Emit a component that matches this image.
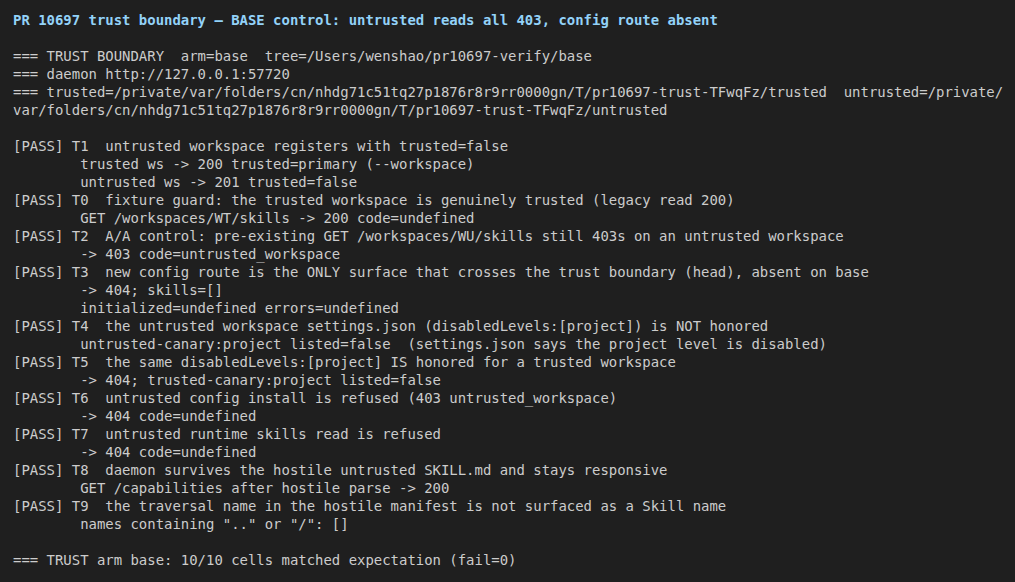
const lines = [
  "=== TRUST BOUNDARY  arm=base  tree=/Users/wenshao/pr10697-verify/base",
  "=== daemon http://127.0.0.1:57720",
  "=== trusted=/private/var/folders/cn/nhdg71c51tq27p1876r8r9rr0000gn/T/pr10697-trust-TFwqFz/trusted  untrusted=/private/",
  "var/folders/cn/nhdg71c51tq27p1876r8r9rr0000gn/T/pr10697-trust-TFwqFz/untrusted",
  "",
  "[PASS] T1  untrusted workspace registers with trusted=false",
  "        trusted ws -> 200 trusted=primary (--workspace)",
  "        untrusted ws -> 201 trusted=false",
  "[PASS] T0  fixture guard: the trusted workspace is genuinely trusted (legacy read 200)",
  "        GET /workspaces/WT/skills -> 200 code=undefined",
  "[PASS] T2  A/A control: pre-existing GET /workspaces/WU/skills still 403s on an untrusted workspace",
  "        -> 403 code=untrusted_workspace",
  "[PASS] T3  new config route is the ONLY surface that crosses the trust boundary (head), absent on base",
  "        -> 404; skills=[]",
  "        initialized=undefined errors=undefined",
  "[PASS] T4  the untrusted workspace settings.json (disabledLevels:[project]) is NOT honored",
  "        untrusted-canary:project listed=false  (settings.json says the project level is disabled)",
  "[PASS] T5  the same disabledLevels:[project] IS honored for a trusted workspace",
  "        -> 404; trusted-canary:project listed=false",
  "[PASS] T6  untrusted config install is refused (403 untrusted_workspace)",
  "        -> 404 code=undefined",
  "[PASS] T7  untrusted runtime skills read is refused",
  "        -> 404 code=undefined",
  "[PASS] T8  daemon survives the hostile untrusted SKILL.md and stays responsive",
  "        GET /capabilities after hostile parse -> 200",
  "[PASS] T9  the traversal name in the hostile manifest is not surfaced as a Skill name",
  '        names containing ".." or "/": []',
  "",
  "=== TRUST arm base: 10/10 cells matched expectation (fail=0)",
];

export default function App() {
  return (
    <main className="h-[582px] w-[1015px] overflow-hidden bg-[#1f1f1f] px-[13px] pt-[11px] font-['DejaVu_Sans_Mono',monospace] text-[13.95px] leading-[18px] text-[#cccccc]">
      <div className="whitespace-pre font-bold text-[#93d2f8]">
        PR 10697 trust boundary — BASE control: untrusted reads all 403, config route absent
      </div>

      <div className="h-[18px]" />

      {lines.map((line, i) => (
        <div key={i} className="h-[18px] whitespace-pre">
          {line}
        </div>
      ))}
    </main>
  );
}
